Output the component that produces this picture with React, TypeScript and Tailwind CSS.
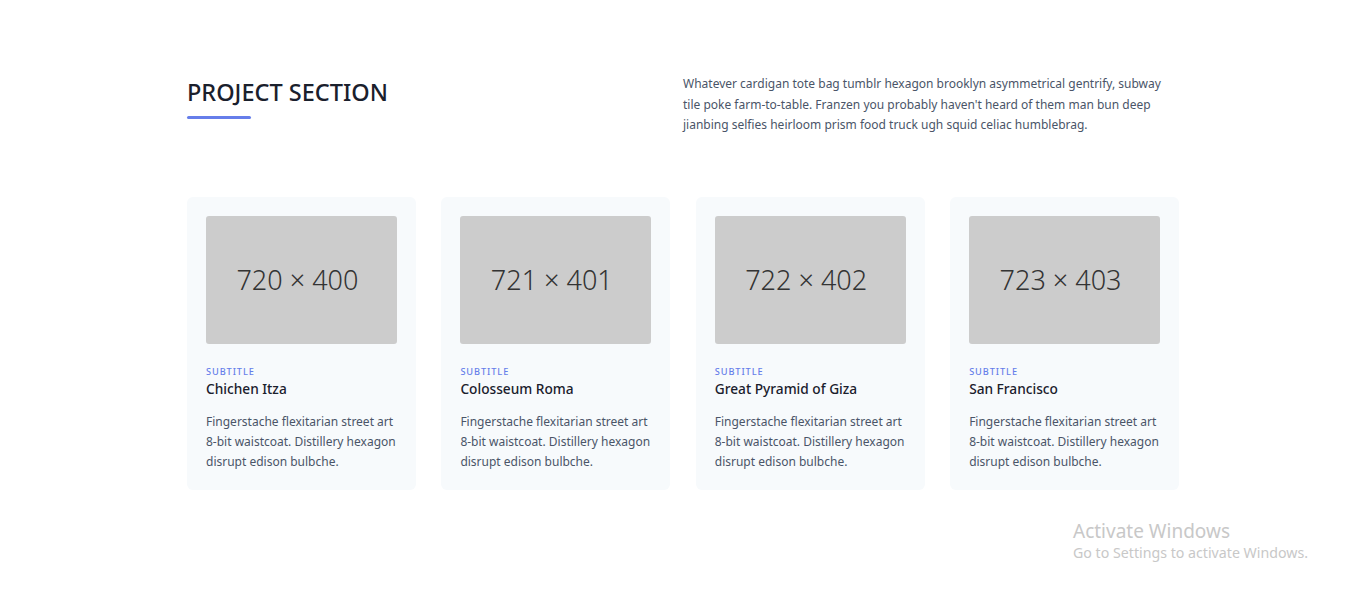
import React from "react";

const cards = [
  { img: "720 × 400", title: "Chichen Itza" },
  { img: "721 × 401", title: "Colosseum Roma" },
  { img: "722 × 402", title: "Great Pyramid of Giza" },
  { img: "723 × 403", title: "San Francisco" },
];

export default function App() {
  return (
    <div
      className="relative min-h-[593px] w-full bg-white text-[#4a5568]"
      style={{ fontFamily: '"Noto Sans", "Open Sans", sans-serif' }}
    >
      <section className="mx-auto w-[992px] pt-[77px]">
        <div className="flex w-full">
          <div className="w-1/2">
            <h1 className="pt-[1px] text-[23.5px] leading-[29px] font-medium text-[#1a202c] mb-[9px]">
              PROJECT SECTION
            </h1>
            <div className="h-[3px] w-[64px] rounded bg-[#667eea]"></div>
          </div>
          <p className="-mt-[3px] w-1/2 pr-[4px] text-[12px] leading-[20.5px] text-[#4a5568]">
            Whatever cardigan tote bag tumblr hexagon brooklyn asymmetrical gentrify, subway tile poke
            farm-to-table. Franzen you probably haven't heard of them man bun deep jianbing selfies
            heirloom prism food truck ugh squid celiac humblebrag.
          </p>
        </div>
        <div className="mt-[61px] flex gap-[25.5px]">
          {cards.map((c) => (
            <div key={c.title} className="w-[229.6px] rounded-[6px] bg-[#f7fafc] p-[19px] pb-[18px]">
              <div className="flex h-[128px] w-full items-center justify-center rounded-[3px] bg-[#cccccc] pr-[8px] pt-[2px]">
                <span className="text-[27px] font-light text-[#333333]">{c.img}</span>
              </div>
              <h3 className="mt-[21px] text-[9.2px] leading-[13px] font-medium tracking-[0.1em] text-[#667eea]">
                SUBTITLE
              </h3>
              <h2 className="text-[13.7px] leading-[22px] font-medium text-[#1a202c] mb-[12px]">
                {c.title}
              </h2>
              <p className="text-[12px] leading-[20px] text-[#4a5568]">
                Fingerstache flexitarian street art 8-bit waistcoat. Distillery hexagon disrupt edison
                bulbche.
              </p>
            </div>
          ))}
        </div>
      </section>
      <div className="absolute left-[1073px] top-[519px] text-[#c8c8c8]">
        <div className="text-[19px] leading-[24px]">Activate Windows</div>
        <div className="text-[14.2px] leading-[19px]">Go to Settings to activate Windows.</div>
      </div>
    </div>
  );
}
